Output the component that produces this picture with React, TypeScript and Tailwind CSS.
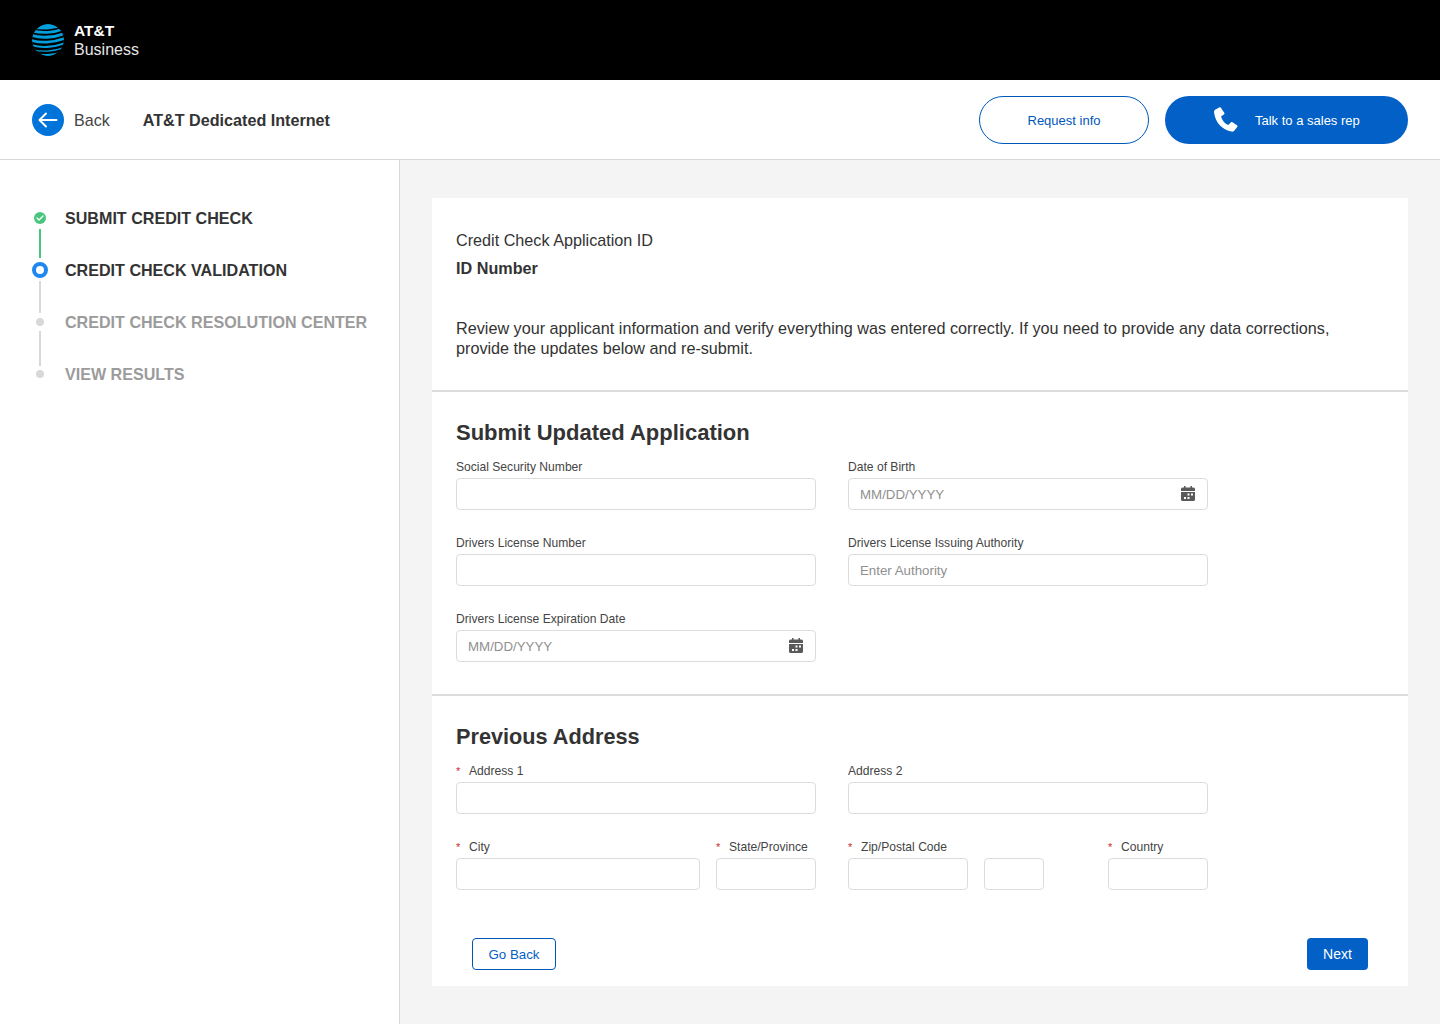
import React from "react";

const font = "font-['Liberation_Sans',Arial,sans-serif]";

const Globe = () => (
  <svg width="32" height="32" viewBox="0 0 32 32">
    <defs>
      <clipPath id="globe">
        <circle cx="16" cy="16" r="16" />
      </clipPath>
    </defs>
    <g clipPath="url(#globe)">
      <circle cx="16" cy="16" r="16" fill="#009fdb" />
      <g fill="none" stroke="#000" strokeLinecap="round">
        <path d="M-2 4C8 7.500 22 7 34 2" strokeWidth="1.400" />
        <path d="M-2 8.500C8 12 22 11.500 34 6.500" strokeWidth="1.800" />
        <path d="M-2 13.500C8 17 22 16.500 34 11.500" strokeWidth="2" />
        <path d="M-2 18.500C8 22 22 21.500 34 16.500" strokeWidth="2.300" />
        <path d="M-2 23C8 26.500 22 26 34 21" strokeWidth="2.500" />
        <path d="M0 27C9 30 22 29.500 33 25" strokeWidth="2.300" />
      </g>
    </g>
  </svg>
);

const BackIcon = () => (
  <div className="flex h-8 w-8 items-center justify-center rounded-full bg-[#0074d9]">
    <svg width="20" height="16" viewBox="0 0 20 16" fill="none" stroke="#fff" strokeWidth="2" strokeLinecap="round" strokeLinejoin="round">
      <path d="M8 1.500 1.500 8 8 14.500M2 8h16.500" />
    </svg>
  </div>
);

const PhoneIcon = () => (
  <svg width="24" height="25" viewBox="0 0 24 25" fill="#fff">
    <path d="M5.200.6 1.500 2.400C.3 3 0 4.200.1 5.500c.5 5 2.800 9.700 6.200 13.300 3 3 7 5.200 11.100 5.800 1.200.2 2.300-.1 3-1.100l2.800-3.500c.5-.6.400-1.300-.2-1.700l-4.500-3c-.6-.4-1.200-.3-1.700.2l-1.900 2c-.4.400-.8.400-1.300.2-3-1.500-5.200-4.300-6.300-7.500-.2-.5-.1-.9.300-1.200l2.300-1.500c.6-.4.800-1 .5-1.600L7.200 1.200C6.800.4 6-.1 5.200.6Z" />
  </svg>
);

const CalendarIcon = () => (
  <svg width="14" height="15" viewBox="0 0 14 15" className="mb-[2px] shrink-0">
    <path fill="#5a5a5a" d="M3 0h1.500v1.500h5V0H11v1.500h1.500A1.500 1.500 0 0 1 14 3v2H0V3a1.500 1.500 0 0 1 1.500-1.500H3V0ZM0 6h14v7.500a1.500 1.500 0 0 1-1.500 1.500h-11A1.500 1.500 0 0 1 0 13.500V6Z" />
    <g fill="#fff">
      <rect x="6.500" y="7.500" width="2" height="2" />
      <rect x="10" y="7.500" width="2" height="2" />
      <rect x="3" y="11" width="2" height="2" />
      <rect x="6.500" y="11" width="2" height="2" />
    </g>
  </svg>
);

const steps = [
  { label: "SUBMIT CREDIT CHECK", state: "done", line: "top-[19px] h-[29px] bg-[#48c67e]" },
  { label: "CREDIT CHECK VALIDATION", state: "active", line: "top-[19px] h-[32px] bg-[#d8d8d8]" },
  { label: "CREDIT CHECK RESOLUTION CENTER", state: "todo", line: "top-[17px] h-[35px] bg-[#d8d8d8]" },
  { label: "VIEW RESULTS", state: "todo", line: "" },
];

const StepDot = ({ state }: { state: string }) => {
  if (state === "done") {
    return (
      <div className="flex h-3 w-3 items-center justify-center rounded-full bg-[#48c67e]">
        <svg width="8" height="6" viewBox="0 0 8 6" fill="none" stroke="#fff" strokeWidth="1.300" strokeLinecap="round" strokeLinejoin="round">
          <path d="m1 3 2 2 4-4" />
        </svg>
      </div>
    );
  }
  if (state === "active") {
    return <div className="h-4 w-4 rounded-full border-[4px] border-[#1e88f0] bg-white" />;
  }
  return <div className="h-2 w-2 rounded-full bg-[#d8d8d8]" />;
};

const Stepper = () => (
  <div className="flex flex-col">
    {steps.map((s) => (
      <div key={s.label} className="flex h-[52px] items-start">
        <div className="relative flex h-[52px] w-4 justify-center">
          <div className="flex h-4 w-4 items-center justify-center">
            <StepDot state={s.state} />
          </div>
          {s.line && <div className={`absolute left-[7px] w-[2px] ${s.line}`} />}
        </div>
        <div className={`ml-[17px] text-[16.100px] font-bold leading-4 ${s.state === "todo" ? "text-[#9b9b9b]" : "text-[#333333]"}`}>
          {s.label}
        </div>
      </div>
    ))}
  </div>
);

const Field = ({
  label,
  width,
  required,
  placeholder,
  calendar,
}: {
  label?: string;
  width: string;
  required?: boolean;
  placeholder?: string;
  calendar?: boolean;
}) => (
  <div className={`flex shrink-0 flex-col ${width}`}>
    <div className="flex h-[19px] items-start text-[12.100px] leading-[16px] text-[#444444]">
      {required && <span className="w-[13px] text-[11px] text-[#cf2a2a]">*</span>}
      {label}
    </div>
    <div className="flex h-8 items-center justify-between rounded border border-[#dcdcdc] bg-white pl-[11px] pr-[12px] text-[13.300px] text-[#8f8f8f]">
      <span className="pt-[1px]">{placeholder}</span>
      {calendar && <CalendarIcon />}
    </div>
  </div>
);

export default function App() {
  return (
    <div className={`flex min-h-[1024px] flex-col bg-white ${font}`}>
      <header className="flex h-20 items-center gap-[10px] bg-black pl-8">
        <Globe />
        <div className="pt-[2px] text-white">
          <div className="text-[15.500px] font-bold leading-[18px]">AT&amp;T</div>
          <div className="text-[16px] leading-[20px] text-[#e6e6e6]">Business</div>
        </div>
      </header>

      <div className="flex h-20 items-center justify-between border-b border-[#d8d8d8] px-8">
        <div className="flex items-center">
          <BackIcon />
          <span className="ml-[10px] pt-[1px] text-[16.100px] text-[#444444]">Back</span>
          <span className="ml-[33px] pt-[1px] text-[16.150px] font-bold text-[#333333]">AT&amp;T Dedicated Internet</span>
        </div>
        <div className="flex items-center gap-4">
          <button className="h-12 w-[170px] rounded-full border border-[#0057b8] bg-white pt-[2px] text-[13px] text-[#0057b8]">
            Request info
          </button>
          <button className="flex h-12 w-[243px] items-center rounded-full bg-[#0260c6] pl-[49px] text-[13px] text-white">
            <PhoneIcon />
            <span className="ml-[17px] pt-[2px]">Talk to a sales rep</span>
          </button>
        </div>
      </div>

      <div className="flex flex-1">
        <aside className="w-[400px] shrink-0 border-r border-[#d8d8d8] bg-white pl-8 pt-[50px]">
          <Stepper />
        </aside>

        <main className="flex-1 bg-[#f4f4f4] px-8 pb-[38px] pt-[38px]">
          <div className="bg-white">
            <section className="h-[194px] border-b-2 border-[#dcdcdc] px-6 pt-[32px] text-[#333333]">
              <div className="text-[16.200px] leading-5">Credit Check Application ID</div>
              <div className="mt-2 text-[16.200px] font-bold leading-5">ID Number</div>
              <p className="mt-[40px] text-[16.200px] leading-[20px]">
                Review your applicant information and verify everything was entered correctly. If you need to provide any data corrections, provide the updates below and re-submit.
              </p>
            </section>

            <section className="h-[304px] border-b-2 border-[#dcdcdc] px-6 pt-[27px]">
              <h2 className="text-[22px] font-bold leading-7 text-[#333333]">Submit Updated Application</h2>
              <div className="mt-[12px] flex flex-col gap-[25px]">
                <div className="flex gap-8">
                  <Field label="Social Security Number" width="w-[360px]" />
                  <Field label="Date of Birth" width="w-[360px]" placeholder="MM/DD/YYYY" calendar />
                </div>
                <div className="flex gap-8">
                  <Field label="Drivers License Number" width="w-[360px]" />
                  <Field label="Drivers License Issuing Authority" width="w-[360px]" placeholder="Enter Authority" />
                </div>
                <div className="flex gap-8">
                  <Field label="Drivers License Expiration Date" width="w-[360px]" placeholder="MM/DD/YYYY" calendar />
                </div>
              </div>
            </section>

            <section className="h-[290px] px-6 pt-[27px]">
              <h2 className="text-[21.700px] font-bold leading-7 text-[#333333]">Previous Address</h2>
              <div className="mt-[12px] flex flex-col gap-[25px]">
                <div className="flex gap-8">
                  <Field label="Address 1" width="w-[360px]" required />
                  <Field label="Address 2" width="w-[360px]" />
                </div>
                <div className="flex">
                  <Field label="City" width="w-[244px]" required />
                  <div className="ml-4">
                    <Field label="State/Province" width="w-[100px]" required />
                  </div>
                  <div className="ml-8">
                    <Field label="Zip/Postal Code" width="w-[120px]" required />
                  </div>
                  <div className="ml-4">
                    <Field width="w-[60px]" />
                  </div>
                  <div className="ml-16">
                    <Field label="Country" width="w-[100px]" required />
                  </div>
                </div>
              </div>
              <div className="mt-[48px] flex justify-between pl-4 pr-4">
                <button className="h-8 w-[84px] rounded border border-[#0057b8] bg-white pt-[1px] text-[13.300px] text-[#0260c6]">Go Back</button>
                <button className="h-8 w-[61px] rounded bg-[#0260c6] pt-[1px] text-[14px] text-white">Next</button>
              </div>
            </section>
          </div>
        </main>
      </div>
    </div>
  );
}
